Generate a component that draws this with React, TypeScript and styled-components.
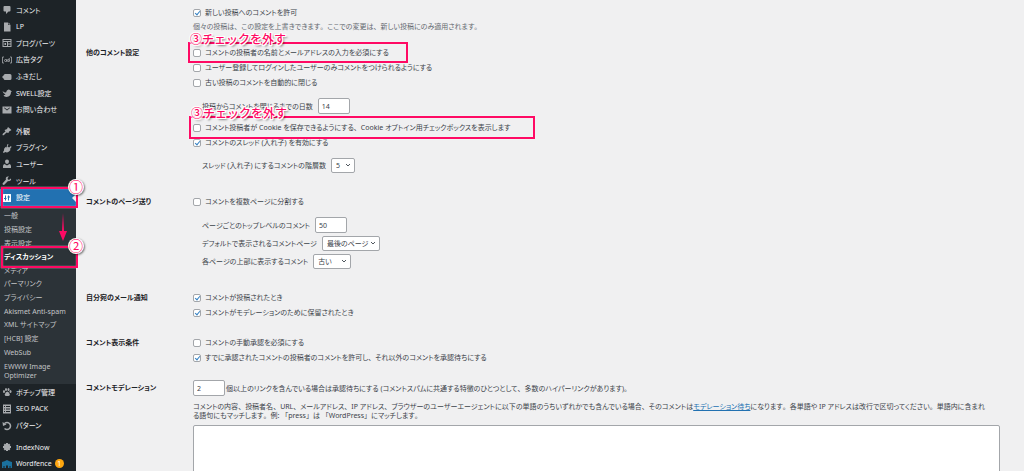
import React, { ReactNode } from "react";
import styled, { createGlobalStyle, css } from "styled-components";

const PINK = "#ff0a64";

const Global = createGlobalStyle`
  *, *::before, *::after { box-sizing: border-box; }
  html, body { margin: 0; padding: 0; background: #f0f0f1; }
  body {
    font-family: "Noto Sans", "Noto Sans CJK JP", sans-serif;
    font-size: 7px;
    line-height: 9px;
    color: #3c434a;
    font-feature-settings: "palt";
  }
  button, input, select, textarea { font: inherit; color: inherit; margin: 0; }
`;

const Shell = styled.div`
  display: flex;
  height: 100vh;
  overflow: hidden;
`;

/* ---------- sidebar ---------- */

const Sidebar = styled.nav`
  flex: 0 0 76px;
  display: flex;
  flex-direction: column;
  gap: 5px;
  padding-top: 2px;
  background: #1d2327;
  color: #f0f0f1;
`;

const MenuGroup = styled.ul<{ $height: number }>`
  list-style: none;
  margin: 0;
  padding: 0;
  flex: none;
  display: grid;
  grid-auto-rows: 1fr;
  min-height: ${(p) => p.$height}px;
`;

const MenuItem = styled.li`
  position: relative;
  display: flex;
`;

const MenuLink = styled.a<{ $active?: boolean }>`
  flex: 1;
  display: flex;
  align-items: center;
  gap: 4px;
  padding-left: 2px;
  color: inherit;
  text-decoration: none;
  white-space: nowrap;
  ${(p) =>
    p.$active &&
    css`
      background: #2271b1;
      color: #fff;
      &::after {
        content: "";
        margin-left: auto;
        border: 4px solid transparent;
        border-right-color: #f0f0f1;
        border-left: 0;
      }
    `}
`;

const MenuIcon = styled.svg<{ $color?: string }>`
  width: 10px;
  height: 10px;
  flex: none;
  color: ${(p) => p.$color ?? "#a7aaad"};
`;

const UpdateBadge = styled.span`
  display: grid;
  place-items: center;
  width: 9px;
  height: 9px;
  margin-left: -1px;
  border-radius: 50%;
  background: #ffa70f;
  color: #fff;
`;

const SubBlock = styled.div`
  flex: none;
  margin-top: -5px;
  margin-bottom: -5px;
  padding: 3px 0 0;
  background: #2c3338;
  color: #c3c4c7;
`;

const SubLink = styled.a<{ $current?: boolean }>`
  flex: 1;
  display: flex;
  align-items: center;
  padding-left: 4px;
  color: ${(p) => (p.$current ? "#fff" : "inherit")};
  font-weight: ${(p) => (p.$current ? 700 : 400)};
  text-decoration: none;
  white-space: nowrap;
`;

const WideSubLink = styled.a`
  display: block;
  padding: 3px 16px 4px 4px;
  color: inherit;
  text-decoration: none;
`;

/* ---------- annotations ---------- */

const Frame = styled.span<{ $out: string }>`
  position: absolute;
  inset: ${(p) => p.$out};
  border: 2px solid ${PINK};
  box-shadow: 0 0 1px #fff, inset 0 0 1px #fff;
  pointer-events: none;
  z-index: 2;
`;

const noteText = css`
  position: absolute;
  z-index: 3;
  color: ${PINK};
  font-family: "Noto Sans CJK JP", sans-serif;
  font-feature-settings: normal;
  white-space: nowrap;
  pointer-events: none;
`;

const NoteLabel = styled.span`
  ${noteText}
  left: 0;
  top: -13px;
  font-size: 12px;
  font-weight: 500;
  line-height: 16px;
  text-shadow: 1px 0 #fff, -1px 0 #fff, 0 1px #fff, 0 -1px #fff, 1px 1px #fff, -1px -1px #fff,
    1px -1px #fff, -1px 1px #fff, 2px 2px 2px rgba(0, 0, 0, 0.5);
`;

const NoteNumber = styled.span`
  ${noteText}
  right: -8px;
  top: -10px;
  width: 16px;
  height: 16px;
  border-radius: 50%;
  background: #fff;
  box-shadow: 1px 1px 2px rgba(0, 0, 0, 0.5);
  font-size: 14px;
  font-weight: 400;
  line-height: 15px;
  text-align: center;
`;

const NoteArrow = styled.svg`
  position: absolute;
  z-index: 3;
  left: 55px;
  top: 24px;
  width: 10px;
  height: 28px;
  pointer-events: none;
`;

/* ---------- settings form ---------- */

const Main = styled.main`
  flex: 1;
  min-width: 0;
  padding: 0 16px 0 10px;
`;

const Section = styled.section<{ $top?: number }>`
  display: grid;
  grid-template-columns: 107px minmax(0, 1fr);
  margin-top: ${(p) => p.$top ?? 0}px;
`;

const Heading = styled.h2`
  margin: 0;
  padding-top: 3px;
  font-size: 7px;
  line-height: 9px;
  font-weight: 700;
  color: #1d2327;
`;

const Fields = styled.div`
  display: flex;
  flex-direction: column;
  align-items: flex-start;
`;

const CheckLabel = styled.label`
  position: relative;
  display: flex;
  align-items: center;
  gap: 4px;
  height: 15px;
  white-space: nowrap;
`;

const Checkbox = styled.input.attrs({ type: "checkbox" })`
  appearance: none;
  flex: none;
  display: grid;
  place-items: center;
  width: 8px;
  height: 8px;
  border: 1px solid #a3a6aa;
  border-radius: 2px;
  background: #fff;
  &:checked::after {
    content: "";
    width: 3px;
    height: 5px;
    margin-top: -1px;
    border: solid #3582c4;
    border-width: 0 1px 1px 0;
    transform: rotate(40deg);
  }
`;

const SubFields = styled.div<{ $bottom?: number }>`
  display: flex;
  flex-direction: column;
  align-items: flex-start;
  gap: 3px;
  padding: 8px 0 ${(p) => p.$bottom ?? 0}px 9px;
`;

const FieldLabel = styled.label<{ $tight?: boolean }>`
  display: flex;
  align-items: center;
  gap: ${(p) => (p.$tight ? 1 : 5)}px;
  white-space: nowrap;
`;

const NumberBox = styled.input.attrs({ type: "text", inputMode: "numeric" })`
  width: 32px;
  height: 16px;
  padding: 0 3px;
  border: 1px solid #a3a6aa;
  border-radius: 2px;
  background: #fff;
`;

const SelectWrap = styled.span<{ $width: number }>`
  position: relative;
  display: flex;
  width: ${(p) => p.$width}px;
`;

const Select = styled.select`
  appearance: none;
  width: 100%;
  height: 15px;
  padding: 0 10px 0 4px;
  border: 1px solid #a3a6aa;
  border-radius: 2px;
  background: #fff;
`;

const Chevron = styled.svg`
  position: absolute;
  right: 4px;
  top: 5px;
  width: 6px;
  height: 5px;
  pointer-events: none;
`;

const Description = styled.p`
  margin: 2px 0 0;
  line-height: 9px;
  color: #646970;
`;

const Paragraph = styled.p`
  margin: 6px 0 5px;
  white-space: nowrap;
`;

const Link = styled.a`
  color: #2271b1;
`;

const KeyArea = styled.textarea`
  display: block;
  width: calc(100% - 8px);
  height: 110px;
  padding: 3px;
  border: 1px solid #a3a6aa;
  border-radius: 2px;
  background: #fff;
  resize: none;
`;

const FullWidth = styled.span`
  font-feature-settings: normal;
`;

/* Kana are set proportionally; punctuation and brackets keep their full-width cell. */
const Jp = ({ children }: { children: string }) => (
  <span>
    {children.split(/([、。「」])/).map((part, i) => (i % 2 ? <FullWidth key={i}>{part}</FullWidth> : part))}
  </span>
);

/* ---------- icons (20 × 20 grid) ---------- */

const icons: Record<string, ReactNode> = {
  comment: <path fill="currentColor" d="M5 2h10q2 0 2 2v7q0 2-2 2h-2l-5 5v-5H5q-2 0-2-2V4q0-2 2-2z" />,
  page: <path fill="currentColor" d="M4 1h8v5h5v13H4zM13 1l4 4h-4z" />,
  parts: (
    <path
      fill="currentColor"
      fillRule="evenodd"
      d="M1 2h18v16H1zM3 4v2h14V4zM3 8v8h7V8zM12 8v3h5V8zM12 13v3h5v-3zM5 10h3v4H5z"
    />
  ),
  ad: (
    <g fill="none" stroke="currentColor" strokeWidth="1.6">
      <path d="M4 4H1v12h3M16 4h3v12h-3" />
      <circle cx="7" cy="11" r="2" />
      <path d="M9.300 8.500v5M14.500 6v7.500" />
      <circle cx="12.500" cy="11" r="2" />
    </g>
  ),
  balloon: <path fill="currentColor" d="M6 4h10q3 0 3 3v6q0 3-3 3H6q-2 0-3-3l-3-3 3-3q1-3 3-3z" />,
  swell: <path fill="currentColor" d="M1 6q3 3 7 3 1-5 5-6 4 0 5 3l2 1-2 1q0 9-9 10-5 0-6-4 3 0 4-1-5-2-6-7z" />,
  mail: <path fill="currentColor" fillRule="evenodd" d="M1 3h18v14H1zM4 6l6 5 6-5-1-1-5 4-5-4z" />,
  brush: <path fill="currentColor" d="M12 2l7 6-3 2-2 1-1 3-4-1-5 5q-2 1-3 0 0-2 1-3l5-4-2-3 3-1 2-1z" />,
  plug: <path fill="currentColor" d="M11 2l2 1-2 4 3 2 4-3 1 2-3 4 1 2-3 3q-4 3-7 1l-4 2-1-2 2-3q-1-4 3-7l2 1z" />,
  user: (
    <path fill="currentColor" d="M10 1q4 0 4 4t-4 5q-4-1-4-5t4-4zM5 10l5 3 5-3q3 1 3 4v4H2v-4q0-3 3-4z" />
  ),
  wrench: <path fill="currentColor" d="M17 5l-3 3-3-2 1-3 2-2q-4-1-6 2-1 2 0 4l-7 8q0 3 3 3l8-8q4 1 6-2 1-2-1-3z" />,
  sliders: (
    <path
      fill="currentColor"
      fillRule="evenodd"
      d="M3 2h14q1 0 1 1v14q0 1-1 1H3q-1 0-1-1V3q0-1 1-1zM6 5v5H4v2h2v3h2v-3h1v-2H8V5zM12 5v2h-1v2h1v6h2V9h2V7h-2V5z"
    />
  ),
  paw: (
    <g fill="currentColor">
      <ellipse cx="4" cy="9" rx="2" ry="3" />
      <ellipse cx="8" cy="5" rx="2" ry="3" />
      <ellipse cx="13" cy="5" rx="2" ry="3" />
      <ellipse cx="17" cy="9" rx="2" ry="3" />
      <path d="M10.500 9q4 1 5 6 0 3-3 3h-4q-3 0-3-3 1-5 5-6z" />
    </g>
  ),
  list: (
    <path
      fill="currentColor"
      fillRule="evenodd"
      d="M2 1h16v18H2zM4 4v2h2V4zM8 4v2h8V4zM4 9v2h2V9zM8 9v2h8V9zM4 14v2h2v-2zM8 14v2h8v-2z"
    />
  ),
  redo: (
    <g fill="none" stroke="currentColor" strokeWidth="3">
      <path d="M5 5q5-4 10 0 4 5 0 10-5 4-10 0" />
      <path fill="currentColor" stroke="none" d="M1 2l1 8 7-3z" />
    </g>
  ),
  gear: (
    <g>
      <circle cx="10" cy="10" r="6" fill="currentColor" />
      <path
        stroke="currentColor"
        strokeWidth="4"
        d="M10 2v16M2 10h16M4.500 4.500l11 11M15.500 4.500l-11 11"
      />
    </g>
  ),
  fence: (
    <path
      fill="currentColor"
      fillRule="evenodd"
      d="M0 6q5-1 10-4 5 3 10 4v12h-3v-4h-2v4h-3v-5H8v5H5v-4H3v4H0z"
    />
  ),
};

const Icon = ({ name, color }: { name: string; color?: string }) => (
  <MenuIcon viewBox="0 0 20 20" aria-hidden="true" $color={color}>
    {icons[name]}
  </MenuIcon>
);

type Entry = { icon: string; text: string; active?: boolean; color?: string; badge?: string };

const groups: { height: number; items: Entry[] }[] = [
  {
    height: 116,
    items: [
      { icon: "comment", text: "コメント" },
      { icon: "page", text: "LP" },
      { icon: "parts", text: "ブログパーツ" },
      { icon: "ad", text: "広告タグ" },
      { icon: "balloon", text: "ふきだし" },
      { icon: "swell", text: "SWELL設定" },
      { icon: "mail", text: "お問い合わせ" },
    ],
  },
  {
    height: 83,
    items: [
      { icon: "brush", text: "外観" },
      { icon: "plug", text: "プラグイン" },
      { icon: "user", text: "ユーザー" },
      { icon: "wrench", text: "ツール" },
      { icon: "sliders", text: "設定", active: true, color: "#fff" },
    ],
  },
  {
    height: 50,
    items: [
      { icon: "paw", text: "ポチップ管理" },
      { icon: "list", text: "SEO PACK" },
      { icon: "redo", text: "パターン" },
    ],
  },
  {
    height: 33,
    items: [
      { icon: "gear", text: "IndexNow" },
      { icon: "fence", text: "Wordfence", color: "#1b719e", badge: "1" },
    ],
  },
];

const subItems = [
  "一般",
  "投稿設定",
  "表示設定",
  "ディスカッション",
  "メディア",
  "パーマリンク",
  "プライバシー",
  "Akismet Anti-spam",
  "XML サイトマップ",
  "[HCB] 設定",
  "WebSub",
];

const Group = ({ height, items }: { height: number; items: Entry[] }) => (
  <MenuGroup $height={height}>
    {items.map((it) => (
      <MenuItem key={it.text}>
        <MenuLink href="#" $active={it.active}>
          <Icon name={it.icon} color={it.color} />
          {it.text}
          {it.badge && <UpdateBadge>{it.badge}</UpdateBadge>}
        </MenuLink>
        {it.active && (
          <Frame $out="-2px -2px -2px 1px">
            <NoteNumber>①</NoteNumber>
            <NoteArrow viewBox="0 0 10 28" aria-hidden="true">
              <path d="M5 0L6 18H9L5 28L1 18H4Z" fill={PINK} />
            </NoteArrow>
          </Frame>
        )}
      </MenuItem>
    ))}
  </MenuGroup>
);

const Check = ({ text, on, children }: { text: string; on?: boolean; children?: ReactNode }) => (
  <CheckLabel>
    <Checkbox defaultChecked={on} />
    <Jp>{text}</Jp>
    {children}
  </CheckLabel>
);

const Drop = ({ text, value, width }: { text: string; value: string; width: number }) => (
  <FieldLabel>
    {text}
    <SelectWrap $width={width}>
      <Select defaultValue={value}>
        <option>{value}</option>
      </Select>
      <Chevron viewBox="0 0 6 5" aria-hidden="true">
        <path d="M1 1l2 2 2-2" fill="none" stroke="#50575e" />
      </Chevron>
    </SelectWrap>
  </FieldLabel>
);

/* The page is scrolled, so the first row is mostly above the window. */
const ScrolledSection = styled(Section)`
  margin-top: -12px;
`;

const ScrolledFields = styled(Fields)`
  & > :first-child {
    margin-bottom: 2px;
  }
`;

export default function App() {
  return (
    <>
      <Global />
      <Shell lang="ja">
        <Sidebar>
          <Group {...groups[0]} />
          <Group {...groups[1]} />
          <SubBlock>
            <MenuGroup $height={150}>
              {subItems.map((t) => (
                <MenuItem key={t}>
                  <SubLink href="#" $current={t === "ディスカッション"}>
                    {t}
                  </SubLink>
                  {t === "ディスカッション" && (
                    <Frame $out="-4px -2px -4px 1px">
                      <NoteNumber>②</NoteNumber>
                    </Frame>
                  )}
                </MenuItem>
              ))}
            </MenuGroup>
            <WideSubLink href="#">EWWW Image Optimizer</WideSubLink>
          </SubBlock>
          <Group {...groups[2]} />
          <Group {...groups[3]} />
        </Sidebar>

        <Main>
          <ScrolledSection>
            <span />
            <ScrolledFields>
              <Check on text="新しい投稿に対し他のブログからの通知 (ピンバック・トラックバック) を受け付ける" />
              <Check on text="新しい投稿へのコメントを許可" />
              <Description>
                <Jp>個々の投稿は、この設定を上書きできます。ここでの変更は、新しい投稿にのみ適用されます。</Jp>
              </Description>
            </ScrolledFields>
          </ScrolledSection>

          <Section $top={14}>
            <Heading>他のコメント設定</Heading>
            <Fields>
              <Check text="コメントの投稿者の名前とメールアドレスの入力を必須にする">
                <Frame $out="-3px -19px -3px -5px">
                  <NoteLabel>③チェックを外す</NoteLabel>
                </Frame>
              </Check>
              <Check text="ユーザー登録してログインしたユーザーのみコメントをつけられるようにする" />
              <Check text="古い投稿のコメントを自動的に閉じる" />
              <SubFields $bottom={6}>
                <FieldLabel>
                  投稿からコメントを閉じるまでの日数
                  <NumberBox defaultValue="14" />
                </FieldLabel>
              </SubFields>
              <Check text="コメント投稿者が Cookie を保存できるようにする、Cookie オプトイン用チェックボックスを表示します">
                <Frame $out="-4px -25px -4px -4px">
                  <NoteLabel>③チェックを外す</NoteLabel>
                </Frame>
              </Check>
              <Check on text="コメントのスレッド (入れ子) を有効にする" />
              <SubFields>
                <Drop text="スレッド (入れ子) にするコメントの階層数" value="5" width={24} />
              </SubFields>
            </Fields>
          </Section>

          <Section $top={21}>
            <Heading>コメントのページ送り</Heading>
            <Fields>
              <Check text="コメントを複数ページに分割する" />
              <SubFields>
                <FieldLabel>
                  ページごとのトップレベルのコメント
                  <NumberBox defaultValue="50" />
                </FieldLabel>
                <Drop text="デフォルトで表示されるコメントページ" value="最後のページ" width={58} />
                <Drop text="各ページの上部に表示するコメント" value="古い" width={38} />
              </SubFields>
            </Fields>
          </Section>

          <Section $top={21}>
            <Heading>自分宛のメール通知</Heading>
            <Fields>
              <Check on text="コメントが投稿されたとき" />
              <Check on text="コメントがモデレーションのために保留されたとき" />
            </Fields>
          </Section>

          <Section $top={15}>
            <Heading>コメント表示条件</Heading>
            <Fields>
              <Check text="コメントの手動承認を必須にする" />
              <Check on text="すでに承認されたコメントの投稿者のコメントを許可し、それ以外のコメントを承認待ちにする" />
            </Fields>
          </Section>

          <Section $top={15}>
            <Heading>コメントモデレーション</Heading>
            <div>
              <FieldLabel $tight>
                <NumberBox defaultValue="2" />
                <Jp>個以上のリンクを含んでいる場合は承認待ちにする (コメントスパムに共通する特徴のひとつとして、多数のハイパーリンクがあります)。</Jp>
              </FieldLabel>
              <Paragraph id="keys-help">
                <Jp>コメントの内容、投稿者名、URL、メールアドレス、IP アドレス、ブラウザーのユーザーエージェントに以下の単語のうちいずれかでも含んでいる場合、そのコメントは</Jp>
                <Link href="#">モデレーション待ち</Link>
                <Jp>になります。各単語や IP アドレスは改行で区切ってください。単語内に含まれ</Jp>
                <br />
                <Jp>る語句にもマッチします。例: 「press」は 「WordPress」にマッチします。</Jp>
              </Paragraph>
              <KeyArea aria-labelledby="keys-help" />
            </div>
          </Section>
        </Main>
      </Shell>
    </>
  );
}
